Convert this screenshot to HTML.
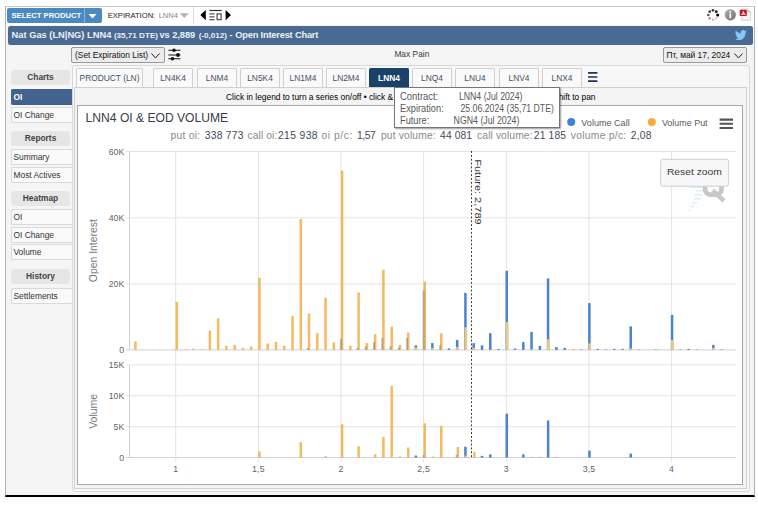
<!DOCTYPE html>
<html><head><meta charset="utf-8">
<style>
*{box-sizing:border-box}
html,body{margin:0;padding:0;background:#fff;}
body{width:758px;height:526px;position:relative;overflow:hidden;font-family:"Liberation Sans",sans-serif;font-size:11px;color:#222}
.abs{position:absolute}
#frame{left:5px;top:6px;width:750px;height:491px;background:#f5f5f5;border:1px solid #b0b0b0;border-top-color:#c8c8c8;border-bottom:2px solid #000;}
#selprod{left:7px;top:8px;width:77px;height:15px;background:#4b8ac0;color:#fff;font-weight:bold;font-size:7.6px;line-height:15px;padding-left:4.5px;border-radius:2px 0 0 2px;white-space:nowrap}
#selarrow{left:84px;top:8px;width:18px;height:15px;background:#4b8ac0;border-left:1.5px solid #8ab6de;border-radius:0 2px 2px 0}
#toolbar{left:6px;top:7px;width:748px;height:18px;background:#fff}
#titlebar{left:7.5px;top:26px;width:745.5px;height:19px;background:#4a6a91;border-radius:2.5px;color:#eaf0f6;font-weight:bold;font-size:9.3px;line-height:19px;white-space:nowrap}
#titlebar span{position:absolute;top:0}
#titlebar .sm{font-size:8.1px;top:0}
.sel{height:16px;border:1px solid #999;border-radius:2px;background:#ececec;font-size:8.4px;line-height:14px;padding-left:3px;white-space:nowrap;color:#111}
#tabsbox{left:71.5px;top:65px;width:678px;height:427px;border:1px solid #d8d8d8;border-radius:3px;background:#f7f7f7}
#panel{left:74px;top:87px;width:673px;height:402px;border:1px solid #d0d0d0;background:#f4f4f4}
#chartbox{left:77px;top:105px;width:666px;height:380px;border:1px solid #a8a8a8;background:#fff}
.tab{position:absolute;top:68px;height:20px;border:1px solid #d0d0d0;border-bottom:none;background:#fafafa;border-radius:2px 2px 0 0;font-size:8.4px;line-height:18px;text-align:center;color:#445366}
.tab.act{background:#1a4168;color:#fff;font-weight:bold;border-color:#1a4168}
.sh{left:11px;width:59px;height:15px;background:#e6e6e6;border-radius:3px;text-align:center;font-weight:bold;font-size:8.4px;line-height:15px;color:#444}
.si{left:11px;width:61px;height:16px;border:1px solid #dadada;border-right:none;border-radius:2px 0 0 2px;background:#f9f9f9;font-size:8.4px;line-height:14px;padding-left:1.5px;color:#333;white-space:nowrap}
.si.act{background:#41638d;color:#fff;border-color:#41638d;font-weight:bold}
svg text{font-family:"Liberation Sans",sans-serif}
</style></head><body>
<div class="abs" id="frame"></div>
<div class="abs" id="toolbar"></div>
<div class="abs" id="selprod">SELECT PRODUCT</div>
<div class="abs" id="selarrow"><svg width="16" height="15" style="display:block"><path d="M3.5 6 L11.5 6 L7.5 10.5 Z" fill="#fff"/></svg></div>
<div class="abs" id="exp" style="left:107.7px;top:8px;height:15px;line-height:15px;font-size:7.6px;color:#222;white-space:nowrap">EXPIRATION: <span style="color:#888;margin-left:1.3px">LNN4</span></div>
<svg class="abs" style="left:179px;top:12px" width="12" height="8"><path d="M0.7 1.3 L9.9 1.3 L5.3 5.9 Z" fill="#b4b4b4"/></svg>
<div class="abs" style="left:193px;top:7px;width:1px;height:17px;background:#ddd"></div>
<svg class="abs" style="left:0;top:0" width="240" height="26">
<path d="M205.8 9.9 L205.8 20.2 L200.3 15.05 Z M225.6 9.9 L225.6 20.2 L231 15.05 Z" fill="#000"/>
<path d="M209.4 10.5 H221.7" stroke="#333" stroke-width="1.2" fill="none"/>
<path d="M209.4 13.8 H214.5 M209.4 16.8 H214.5 M209.4 19.7 H214.5" stroke="#555" stroke-width="1.25" fill="none"/>
<rect x="217.1" y="13.9" width="4" height="5.7" fill="#fff" stroke="#555" stroke-width="1.3"/>
</svg>
<!-- right icons -->
<svg class="abs" style="left:0;top:0" width="758" height="48">
<defs><linearGradient id="ig" x1="0" y1="0" x2="1" y2="1"><stop offset="0" stop-color="#b0b0b0"/><stop offset="1" stop-color="#6e6e6e"/></linearGradient></defs>
<circle cx="713.00" cy="10.30" r="1.35" fill="#3a3a3a"/><circle cx="716.32" cy="11.68" r="1.4" fill="#1e1e1e"/><circle cx="717.70" cy="15.00" r="1.55" fill="#000"/><circle cx="716.32" cy="18.32" r="1.25" fill="#d0d0d0"/><circle cx="713.00" cy="19.70" r="1.25" fill="#bdbdbd"/><circle cx="709.68" cy="18.32" r="1.3" fill="#9a9a9a"/><circle cx="708.30" cy="15.00" r="1.35" fill="#5a5a5a"/><circle cx="709.68" cy="11.68" r="1.35" fill="#444"/>
<circle cx="730.3" cy="14.8" r="5.6" fill="url(#ig)"/>
<circle cx="730.3" cy="11.7" r="0.95" fill="#fff"/><rect x="729.5" y="13.4" width="1.6" height="4.8" fill="#fff"/>
<path d="M741.7 9 H747.7 L750.6 11.9 V20.3 H741.7 Z" fill="#f4f4f4" stroke="#c2c2c2" stroke-width="0.7"/>
<path d="M747.7 9 V11.9 H750.6" fill="#ddd" stroke="#c2c2c2" stroke-width="0.6"/>
<rect x="739.7" y="9.7" width="7.1" height="6.4" rx="0.8" fill="#c4161c"/>
<path d="M741.3 14.6 Q743 13.8 743.3 11.2 Q743.6 13.6 745.4 14.5 Q743.2 13.9 741.3 14.6 Z" fill="#fff" stroke="#fff" stroke-width="0.5"/>
</svg>
<div class="abs" id="titlebar"><span style="left:4.1px">Nat Gas (LN|NG) LNN4</span><span class="sm" style="left:106.4px">(35,71 DTE)</span><span style="left:152.0px;letter-spacing:-0.07px">vs 2,889</span><span class="sm" style="left:191.2px">(-0,012)</span><span style="left:222.0px">-</span><span style="left:227.7px;letter-spacing:-0.2px">Open Interest Chart</span></div>
<svg class="abs" style="left:735.3px;top:29.6px" width="12" height="10.5" viewBox="0 0 24 20" preserveAspectRatio="none"><path fill="#86c6f3" d="M23.6 2.4c-.9.4-1.8.6-2.8.8 1-.6 1.8-1.6 2.1-2.7-.9.6-2 1-3.1 1.200C18.9.7 17.6.1 16.2.1c-2.7 0-4.8 2.2-4.8 4.8 0 .4 0 .8.1 1.100C7.5 5.8 3.9 3.9 1.6 1c-.4.7-.7 1.6-.7 2.5 0 1.7.900 3.2 2.2 4-.8 0-1.5-.2-2.2-.6v.1c0 2.4 1.7 4.3 3.9 4.8-.4.1-.8.2-1.3.2-.3 0-.6 0-.9-.1.6 1.9 2.4 3.3 4.5 3.4-1.7 1.3-3.7 2.1-6 2.1-.4 0-.8 0-1.2-.1 2.2 1.4 4.7 2.2 7.5 2.2 8.9 0 13.8-7.4 13.8-13.800v-.6c1-.7 1.8-1.6 2.4-2.500z"/></svg>

<div class="abs sel" style="left:71px;top:47px;width:93.5px">(Set Expiration List)<svg style="position:absolute;right:3.5px;top:4.5px" width="9" height="6"><path d="M0.5 0.5 L4.5 5 L8.5 0.5" stroke="#222" stroke-width="1" fill="none"/></svg></div>
<svg class="abs" style="left:167px;top:48px" width="15" height="14" viewBox="0 0 15 14"><path d="M1.4 2.3 H13.4 M1.4 7 H13.4 M1.4 10.7 H13.4" stroke="#111" stroke-width="1.1"/><circle cx="7" cy="2.3" r="1.75" fill="#111"/><circle cx="11" cy="7" r="1.9" fill="#111"/><circle cx="5.5" cy="10.7" r="1.75" fill="#111"/></svg>
<div class="abs" style="left:394.4px;top:48px;font-size:8.4px;line-height:13px;color:#3a3a3a">Max Pain</div>
<div class="abs sel" style="left:663px;top:47px;width:84px;padding-left:2.6px">Пт, май 17, 2024<svg style="position:absolute;right:3.5px;top:4.5px" width="9" height="6"><path d="M0.5 0.5 L4.5 5 L8.5 0.5" stroke="#222" stroke-width="1" fill="none"/></svg></div>

<div class="abs" id="tabsbox"></div>
<div class="tab" style="left:76px;width:67px">PRODUCT (LN)</div>
<div class="tab" style="left:153px;width:40px">LN4K4</div>
<div class="tab" style="left:197px;width:40px">LNM4</div>
<div class="tab" style="left:240px;width:40px">LN5K4</div>
<div class="tab" style="left:283px;width:40px">LN1M4</div>
<div class="tab" style="left:326px;width:40px">LN2M4</div>
<div class="tab act" style="left:369px;width:40px">LNN4</div>
<div class="tab" style="left:412px;width:40px">LNQ4</div>
<div class="tab" style="left:455px;width:40px">LNU4</div>
<div class="tab" style="left:499px;width:40px">LNV4</div>
<div class="tab" style="left:542px;width:40px">LNX4</div>

<svg class="abs" style="left:587px;top:70px" width="12" height="14"><path d="M1 2.9 H10.4 M1 7 H10.4 M1 11.1 H10.4" stroke="#1c3556" stroke-width="1.6"/></svg>
<div class="abs" id="panel"></div>
<div class="abs" style="left:226px;top:91px;font-size:8.4px;line-height:12px;white-space:nowrap;color:#000">Click in legend to turn a series on/off • click &amp; drag to zoom in • hold shift to pan</div>
<div class="abs" style="right:162.5px;top:91px;font-size:8.4px;line-height:12px;white-space:nowrap;color:#000">hold shift to pan</div>
<div class="abs" id="chartbox"></div>

<!-- sidebar -->
<div class="abs sh" style="top:70px">Charts</div>
<div class="abs si act" style="top:89px">OI</div>
<div class="abs si" style="top:107px">OI Change</div>
<div class="abs sh" style="top:131px">Reports</div>
<div class="abs si" style="top:149px">Summary</div>
<div class="abs si" style="top:167px">Most Actives</div>
<div class="abs sh" style="top:191px">Heatmap</div>
<div class="abs si" style="top:209px">OI</div>
<div class="abs si" style="top:227px">OI Change</div>
<div class="abs si" style="top:244px">Volume</div>
<div class="abs sh" style="top:269px">History</div>
<div class="abs si" style="top:287.5px">Settlements</div>

<!-- chart -->
<svg class="abs" style="left:0;top:0" width="758" height="526">
<g stroke="#e4e4e4" stroke-width="1">
<line x1="175.7" y1="151.4" x2="175.7" y2="462" /><line x1="258.4" y1="151.4" x2="258.4" y2="462" /><line x1="341.0" y1="151.4" x2="341.0" y2="462" /><line x1="423.6" y1="151.4" x2="423.6" y2="462" /><line x1="506.3" y1="151.4" x2="506.3" y2="462" /><line x1="589.0" y1="151.4" x2="589.0" y2="462" /><line x1="671.6" y1="151.4" x2="671.6" y2="462" />
<line x1="126" y1="151.4" x2="736" y2="151.4"/><line x1="126" y1="217.8" x2="736" y2="217.8"/><line x1="126" y1="283.9" x2="736" y2="283.9"/><line x1="126" y1="364.8" x2="736" y2="364.8"/><line x1="126" y1="395.8" x2="736" y2="395.8"/><line x1="126" y1="426.7" x2="736" y2="426.7"/>
</g>
<g stroke="#d2d2d6" stroke-width="1">
<line x1="126" y1="349.9" x2="736" y2="349.9"/>
<line x1="126" y1="457.5" x2="736" y2="457.5"/>
<line x1="129.5" y1="151" x2="129.5" y2="350"/>
<line x1="129.5" y1="365" x2="129.5" y2="458"/>
</g>
<rect x="134.23" y="341.40" width="2.5" height="8.50" fill="#f2a838" fill-opacity="0.8"/>
<rect x="175.55" y="302.00" width="2.5" height="47.90" fill="#f2a838" fill-opacity="0.8"/>
<rect x="183.82" y="349.50" width="2.5" height="0.40" fill="#f2a838" fill-opacity="0.8"/>
<rect x="192.08" y="348.70" width="2.5" height="1.20" fill="#f2a838" fill-opacity="0.8"/>
<rect x="200.34" y="349.50" width="2.5" height="0.40" fill="#f2a838" fill-opacity="0.8"/>
<rect x="208.61" y="330.50" width="2.5" height="19.40" fill="#f2a838" fill-opacity="0.8"/>
<rect x="216.88" y="318.30" width="2.5" height="31.60" fill="#f2a838" fill-opacity="0.8"/>
<rect x="225.14" y="345.90" width="2.5" height="4.00" fill="#f2a838" fill-opacity="0.8"/>
<rect x="233.41" y="344.90" width="2.5" height="5.00" fill="#f2a838" fill-opacity="0.8"/>
<rect x="241.67" y="347.90" width="2.5" height="2.00" fill="#f2a838" fill-opacity="0.8"/>
<rect x="249.94" y="346.60" width="2.5" height="3.30" fill="#f2a838" fill-opacity="0.8"/>
<rect x="258.20" y="277.70" width="2.5" height="72.20" fill="#f2a838" fill-opacity="0.8"/>
<rect x="266.47" y="343.40" width="2.5" height="6.50" fill="#f2a838" fill-opacity="0.8"/>
<rect x="274.73" y="341.90" width="2.5" height="8.00" fill="#f2a838" fill-opacity="0.8"/>
<rect x="283.00" y="345.70" width="2.5" height="4.20" fill="#f2a838" fill-opacity="0.8"/>
<rect x="291.26" y="316.10" width="2.5" height="33.80" fill="#f2a838" fill-opacity="0.8"/>
<rect x="299.53" y="219.10" width="2.5" height="130.80" fill="#f2a838" fill-opacity="0.8"/>
<rect x="307.79" y="313.60" width="2.5" height="36.30" fill="#f2a838" fill-opacity="0.8"/>
<rect x="306.89" y="347.90" width="2.0" height="2.00" fill="#8c8474" fill-opacity="0.55"/>
<rect x="316.06" y="333.20" width="2.5" height="16.70" fill="#f2a838" fill-opacity="0.8"/>
<rect x="324.32" y="297.80" width="2.5" height="52.10" fill="#f2a838" fill-opacity="0.8"/>
<rect x="332.58" y="342.50" width="2.5" height="7.40" fill="#f2a838" fill-opacity="0.8"/>
<rect x="340.85" y="170.60" width="2.5" height="179.30" fill="#f2a838" fill-opacity="0.8"/>
<rect x="339.95" y="338.90" width="2.0" height="11.00" fill="#8c8474" fill-opacity="0.55"/>
<rect x="349.11" y="345.70" width="2.5" height="4.20" fill="#f2a838" fill-opacity="0.8"/>
<rect x="357.38" y="292.50" width="2.5" height="57.40" fill="#f2a838" fill-opacity="0.8"/>
<rect x="356.48" y="347.90" width="2.0" height="2.00" fill="#8c8474" fill-opacity="0.55"/>
<rect x="365.65" y="343.10" width="2.5" height="6.80" fill="#f2a838" fill-opacity="0.8"/>
<rect x="364.75" y="346.30" width="2.0" height="3.60" fill="#8c8474" fill-opacity="0.55"/>
<rect x="373.91" y="334.30" width="2.5" height="15.60" fill="#f2a838" fill-opacity="0.8"/>
<rect x="373.01" y="342.10" width="2.0" height="7.80" fill="#8c8474" fill-opacity="0.55"/>
<rect x="382.18" y="269.70" width="2.5" height="80.20" fill="#f2a838" fill-opacity="0.8"/>
<rect x="381.27" y="337.90" width="2.0" height="12.00" fill="#8c8474" fill-opacity="0.55"/>
<rect x="390.44" y="326.70" width="2.5" height="23.20" fill="#f2a838" fill-opacity="0.8"/>
<rect x="389.54" y="346.30" width="2.0" height="3.60" fill="#8c8474" fill-opacity="0.55"/>
<rect x="398.71" y="344.90" width="2.5" height="5.00" fill="#f2a838" fill-opacity="0.8"/>
<rect x="397.81" y="347.40" width="2.0" height="2.50" fill="#8c8474" fill-opacity="0.55"/>
<rect x="406.97" y="332.60" width="2.5" height="17.30" fill="#f2a838" fill-opacity="0.8"/>
<rect x="406.07" y="337.90" width="2.0" height="12.00" fill="#8c8474" fill-opacity="0.55"/>
<rect x="414.59" y="345.30" width="2.5" height="4.60" fill="#4a84d0"/>
<rect x="414.84" y="347.40" width="2.8" height="2.50" fill="#e8c68e"/>
<rect x="423.50" y="281.50" width="2.5" height="68.40" fill="#f2a838" fill-opacity="0.8"/>
<rect x="422.60" y="290.40" width="2.0" height="59.50" fill="#8c8474" fill-opacity="0.55"/>
<rect x="431.11" y="343.10" width="2.5" height="6.80" fill="#4a84d0"/>
<rect x="431.36" y="347.90" width="2.8" height="2.00" fill="#e8c68e"/>
<rect x="440.03" y="333.20" width="2.5" height="16.70" fill="#f2a838" fill-opacity="0.8"/>
<rect x="439.13" y="344.90" width="2.0" height="5.00" fill="#8c8474" fill-opacity="0.55"/>
<rect x="447.69" y="348.40" width="2.5" height="1.50" fill="#4a84d0"/>
<rect x="455.91" y="339.90" width="2.5" height="10.00" fill="#4a84d0"/>
<rect x="456.16" y="346.90" width="2.8" height="3.00" fill="#e8c68e"/>
<rect x="464.18" y="292.90" width="2.5" height="57.00" fill="#4a84d0"/>
<rect x="464.43" y="327.30" width="2.8" height="22.60" fill="#e8c68e"/>
<rect x="472.44" y="343.10" width="2.5" height="6.80" fill="#4a84d0"/>
<rect x="472.69" y="347.90" width="2.8" height="2.00" fill="#e8c68e"/>
<rect x="480.76" y="345.30" width="2.5" height="4.60" fill="#4a84d0"/>
<rect x="489.02" y="333.20" width="2.5" height="16.70" fill="#4a84d0"/>
<rect x="497.29" y="348.90" width="2.5" height="1.00" fill="#4a84d0"/>
<rect x="505.50" y="270.80" width="2.5" height="79.10" fill="#4a84d0"/>
<rect x="505.75" y="322.10" width="2.8" height="27.80" fill="#e8c68e"/>
<rect x="513.82" y="348.60" width="2.5" height="1.30" fill="#4a84d0"/>
<rect x="522.08" y="342.10" width="2.5" height="7.80" fill="#4a84d0"/>
<rect x="530.29" y="331.90" width="2.5" height="18.00" fill="#4a84d0"/>
<rect x="530.54" y="349.40" width="2.8" height="0.50" fill="#e8c68e"/>
<rect x="538.61" y="345.90" width="2.5" height="4.00" fill="#4a84d0"/>
<rect x="546.82" y="278.40" width="2.5" height="71.50" fill="#4a84d0"/>
<rect x="547.07" y="339.40" width="2.8" height="10.50" fill="#e8c68e"/>
<rect x="555.14" y="347.10" width="2.5" height="2.80" fill="#4a84d0"/>
<rect x="563.41" y="347.90" width="2.5" height="2.00" fill="#4a84d0"/>
<rect x="572.27" y="348.90" width="2.5" height="1.00" fill="#f2a838" fill-opacity="0.8"/>
<rect x="579.94" y="349.40" width="2.5" height="0.50" fill="#4a84d0"/>
<rect x="588.15" y="303.10" width="2.5" height="46.80" fill="#4a84d0"/>
<rect x="588.40" y="343.40" width="2.8" height="6.50" fill="#e8c68e"/>
<rect x="596.47" y="348.90" width="2.5" height="1.00" fill="#4a84d0"/>
<rect x="604.73" y="349.50" width="2.5" height="0.40" fill="#4a84d0"/>
<rect x="613.00" y="348.90" width="2.5" height="1.00" fill="#4a84d0"/>
<rect x="621.26" y="348.90" width="2.5" height="1.00" fill="#4a84d0"/>
<rect x="629.48" y="326.30" width="2.5" height="23.60" fill="#4a84d0"/>
<rect x="629.73" y="348.40" width="2.8" height="1.50" fill="#e8c68e"/>
<rect x="637.79" y="349.50" width="2.5" height="0.40" fill="#4a84d0"/>
<rect x="654.32" y="349.50" width="2.5" height="0.40" fill="#4a84d0"/>
<rect x="670.80" y="314.90" width="2.5" height="35.00" fill="#4a84d0"/>
<rect x="671.05" y="339.90" width="2.8" height="10.00" fill="#e8c68e"/>
<rect x="679.12" y="349.50" width="2.5" height="0.40" fill="#4a84d0"/>
<rect x="687.38" y="348.90" width="2.5" height="1.00" fill="#4a84d0"/>
<rect x="695.65" y="349.50" width="2.5" height="0.40" fill="#4a84d0"/>
<rect x="712.12" y="344.80" width="2.5" height="5.10" fill="#4a84d0"/>
<rect x="712.38" y="347.90" width="2.8" height="2.00" fill="#e8c68e"/>
<rect x="720.44" y="349.40" width="2.5" height="0.50" fill="#4a84d0"/>
<rect x="258.20" y="451.40" width="2.5" height="6.10" fill="#f2a838" fill-opacity="0.8"/>
<rect x="299.53" y="442.20" width="2.5" height="15.30" fill="#f2a838" fill-opacity="0.8"/>
<rect x="324.32" y="456.20" width="2.5" height="1.30" fill="#f2a838" fill-opacity="0.8"/>
<rect x="340.85" y="424.30" width="2.5" height="33.20" fill="#f2a838" fill-opacity="0.8"/>
<rect x="357.38" y="446.20" width="2.5" height="11.30" fill="#f2a838" fill-opacity="0.8"/>
<rect x="373.91" y="454.30" width="2.5" height="3.20" fill="#f2a838" fill-opacity="0.8"/>
<rect x="382.18" y="436.90" width="2.5" height="20.60" fill="#f2a838" fill-opacity="0.8"/>
<rect x="390.44" y="386.00" width="2.5" height="71.50" fill="#f2a838" fill-opacity="0.8"/>
<rect x="398.71" y="456.50" width="2.5" height="1.00" fill="#f2a838" fill-opacity="0.8"/>
<rect x="406.97" y="447.50" width="2.5" height="10.00" fill="#f2a838" fill-opacity="0.8"/>
<rect x="414.64" y="455.50" width="2.5" height="2.00" fill="#4a84d0"/>
<rect x="423.50" y="423.20" width="2.5" height="34.30" fill="#f2a838" fill-opacity="0.8"/>
<rect x="422.60" y="454.90" width="2.0" height="2.60" fill="#8c8474" fill-opacity="0.55"/>
<rect x="431.76" y="456.50" width="2.5" height="1.00" fill="#f2a838" fill-opacity="0.8"/>
<rect x="440.03" y="425.80" width="2.5" height="31.70" fill="#f2a838" fill-opacity="0.8"/>
<rect x="456.56" y="447.00" width="2.5" height="10.50" fill="#f2a838" fill-opacity="0.8"/>
<rect x="455.66" y="454.90" width="2.0" height="2.60" fill="#8c8474" fill-opacity="0.55"/>
<rect x="464.18" y="446.70" width="2.5" height="10.80" fill="#4a84d0"/>
<rect x="464.43" y="455.50" width="2.8" height="2.00" fill="#e8c68e"/>
<rect x="473.09" y="452.20" width="2.5" height="5.30" fill="#f2a838" fill-opacity="0.8"/>
<rect x="480.76" y="455.90" width="2.5" height="1.60" fill="#4a84d0"/>
<rect x="489.02" y="454.30" width="2.5" height="3.20" fill="#4a84d0"/>
<rect x="505.55" y="413.70" width="2.5" height="43.80" fill="#4a84d0"/>
<rect x="522.08" y="454.30" width="2.5" height="3.20" fill="#4a84d0"/>
<rect x="530.35" y="457.10" width="2.5" height="0.40" fill="#4a84d0"/>
<rect x="538.61" y="457.10" width="2.5" height="0.40" fill="#4a84d0"/>
<rect x="546.88" y="420.50" width="2.5" height="37.00" fill="#4a84d0"/>
<rect x="555.14" y="457.10" width="2.5" height="0.40" fill="#4a84d0"/>
<rect x="588.20" y="450.60" width="2.5" height="6.90" fill="#4a84d0"/>
<rect x="629.53" y="453.60" width="2.5" height="3.90" fill="#4a84d0"/>
<line x1="471.5" y1="151" x2="471.5" y2="458" stroke="#3c3c3c" stroke-width="1" stroke-dasharray="1.95,1.9"/>
<text transform="translate(474.6,159.3) rotate(90)" font-size="9.8" fill="#333" textLength="65.3" lengthAdjust="spacingAndGlyphs">Future: 2,789</text>
<g font-size="8.7" fill="#626262" text-anchor="end">
<text x="124.2" y="154.7">60K</text><text x="124.2" y="221.1">40K</text><text x="124.2" y="287.2">20K</text><text x="124.2" y="353.2">0</text><text x="124.2" y="368.1">15K</text><text x="124.2" y="399.1">10K</text><text x="124.2" y="430.0">5K</text><text x="124.2" y="460.8">0</text>
</g>
<g font-size="8.7" fill="#626262"><text x="175.7" y="472.1" text-anchor="middle" letter-spacing="0.2">1</text><text x="258.4" y="472.1" text-anchor="middle" letter-spacing="0.2">1,5</text><text x="341.0" y="472.1" text-anchor="middle" letter-spacing="0.2">2</text><text x="423.6" y="472.1" text-anchor="middle" letter-spacing="0.2">2,5</text><text x="506.3" y="472.1" text-anchor="middle" letter-spacing="0.2">3</text><text x="589.0" y="472.1" text-anchor="middle" letter-spacing="0.2">3,5</text><text x="671.6" y="472.1" text-anchor="middle" letter-spacing="0.2">4</text></g>
<text transform="translate(97.1,282.2) rotate(-90)" font-size="10.3" fill="#787878" textLength="63.1" lengthAdjust="spacingAndGlyphs">Open Interest</text>
<text transform="translate(97.1,428.8) rotate(-90)" font-size="10.3" fill="#787878" textLength="35" lengthAdjust="spacingAndGlyphs">Volume</text>
<text x="85.6" y="122" font-size="12.6" fill="#363d4b" textLength="142.5" lengthAdjust="spacingAndGlyphs">LNN4 OI &amp; EOD VOLUME</text>
<g font-size="10.3" lengthAdjust="spacingAndGlyphs">
<text x="170.5" y="139.3" textLength="29.6" fill="#8a8a8a">put oi:</text><text x="204.7" y="139.3" textLength="38.8" fill="#434a58">338 773</text><text x="247.6" y="139.3" textLength="29.7" fill="#8a8a8a">call oi:</text><text x="278" y="139.3" textLength="39.5" fill="#434a58">215 938</text><text x="321.4" y="139.3" textLength="30.9" fill="#8a8a8a">oi p/c:</text><text x="356.9" y="139.3" textLength="18.8" fill="#434a58">1,57</text><text x="380.9" y="139.3" textLength="54.8" fill="#8a8a8a">put volume:</text><text x="440.1" y="139.3" textLength="32" fill="#434a58">44 081</text><text x="477.1" y="139.3" textLength="55.4" fill="#8a8a8a">call volume:</text><text x="533.8" y="139.3" textLength="32.2" fill="#434a58">21 185</text><text x="570.8" y="139.3" textLength="55.4" fill="#8a8a8a">volume p/c:</text><text x="630.7" y="139.3" textLength="20.8" fill="#434a58">2,08</text>
</g>
<circle cx="571.2" cy="122" r="4" fill="#3c82e0"/>
<text x="581.3" y="125.6" font-size="8.8" fill="#5a5a5a" textLength="48.4" lengthAdjust="spacingAndGlyphs">Volume Call</text>
<circle cx="651.8" cy="122" r="4" fill="#f5ad3c"/>
<text x="661.9" y="125.6" font-size="8.8" fill="#5a5a5a" textLength="45.7" lengthAdjust="spacingAndGlyphs">Volume Put</text>
<path d="M719.6 119.6 H733 M719.6 123.8 H733 M719.6 128 H733" stroke="#555" stroke-width="2.1"/>
<!-- watermark -->
<rect x="705" y="172" width="16.5" height="22.6" rx="5.5" fill="none" stroke="#c8c8c8" stroke-width="4.8"/>
<path d="M712.6 190.4 L724 200.8" stroke="#c8c8c8" stroke-width="4.4"/>
<path d="M689.1 187.3 H702.6 M696.2 190.7 H702.6 M695 194.8 H702.6 M693.9 198.8 H701 M692.3 202.8 H697 M690.7 206.5 H694.3 M688.7 210.5 H690.7" stroke="#d8edf7" stroke-width="1.4"/>
<!-- reset zoom -->
<rect x="660.7" y="159.3" width="67.9" height="26.9" rx="2" fill="#f7f7f7" stroke="#cfcfcf"/>
<text x="666.9" y="174.7" font-size="9.9" fill="#3a3a3a" textLength="55" lengthAdjust="spacingAndGlyphs">Reset zoom</text>
</svg>

<!-- tooltip -->
<div class="abs" style="left:394px;top:87px;width:166px;height:41px;background:#fff;border:1px solid #767676;box-shadow:1px 1px 1.5px rgba(0,0,0,0.4)"></div>
<svg class="abs" style="left:0;top:0" width="758" height="526"><g font-size="10" fill="#575757" lengthAdjust="spacingAndGlyphs">
<text lengthAdjust="spacingAndGlyphs" x="400" y="99.7" textLength="38.2">Contract:</text><text lengthAdjust="spacingAndGlyphs" x="458.9" y="99.7" textLength="63.6">LNN4 (Jul 2024)</text>
<text lengthAdjust="spacingAndGlyphs" x="400" y="111.6" textLength="43.7">Expiration:</text><text lengthAdjust="spacingAndGlyphs" x="460.5" y="111.6" textLength="93.4">25.06.2024 (35,71 DTE)</text>
<text lengthAdjust="spacingAndGlyphs" x="400" y="123.5" textLength="29.2">Future:</text><text lengthAdjust="spacingAndGlyphs" x="453.6" y="123.5" textLength="65.8">NGN4 (Jul 2024)</text>
</g></svg>
</body></html>
